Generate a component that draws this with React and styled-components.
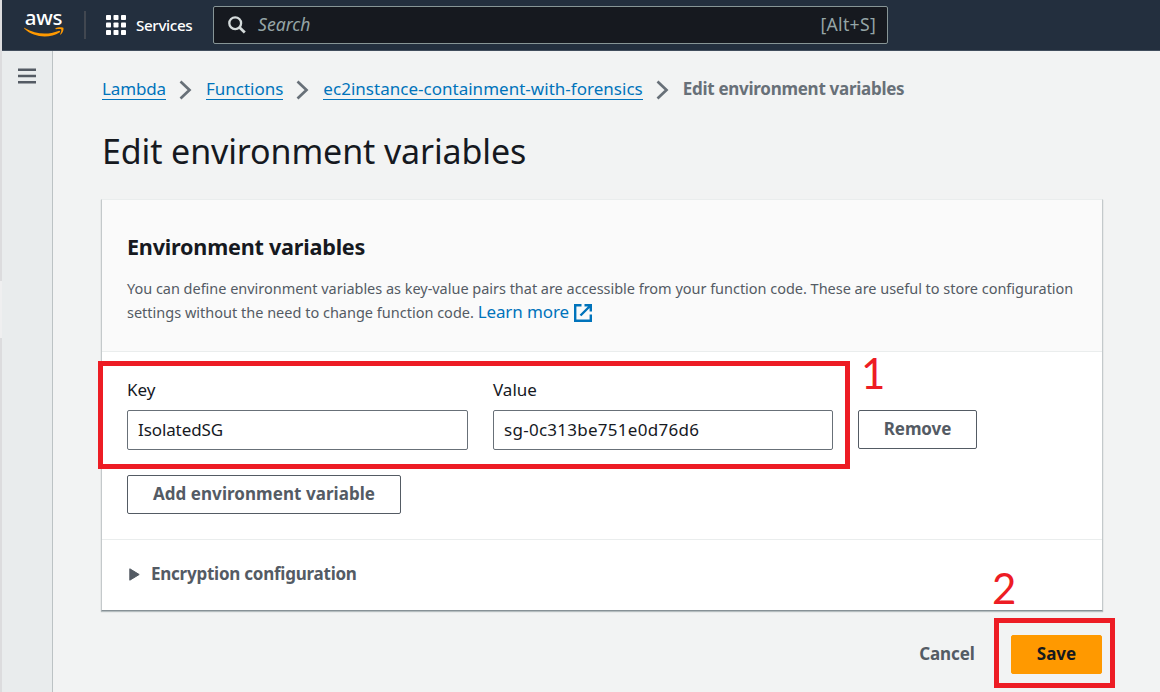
import React from "react";
import styled, { createGlobalStyle, css } from "styled-components";

const GlobalStyle = createGlobalStyle`
  *, *::before, *::after { box-sizing: border-box; }
  html, body { margin: 0; }
  body {
    background: #f2f3f3;
    color: #16191f;
    font-family: "Noto Sans", "Open Sans", sans-serif;
    font-size: 17px;
  }
`;

const Page = styled.div`
  display: flex;
  height: 692px;
  overflow: hidden;
`;

const WindowEdge = styled.div`
  width: 2px;
  flex: none;
  background: linear-gradient(#dcdcde 0 281px, #efeff0 281px 338px, #dcdcde 338px);
`;

const Console = styled.div`
  flex: 1;
  min-width: 0;
  display: flex;
  flex-direction: column;
`;

const TopBar = styled.header`
  flex: none;
  height: 51px;
  display: flex;
  align-items: flex-start;
  background: #232f3e;
  border-bottom: 1px solid #414d5c;
`;

const Logo = styled.div`
  width: 40px;
  margin: 11px 0 0 22px;
  display: flex;
  flex-direction: column;
  align-items: center;
  svg { display: block; }
`;

const LogoWord = styled.span`
  height: 16px;
  line-height: 13px;
  padding-right: 1px;
  font-size: 20.5px;
  font-weight: 500;
  letter-spacing: -0.3px;
  color: #fff;
`;

const Divider = styled.div`
  width: 2px;
  height: 28px;
  margin: 11px 20px 0 20px;
  background: #414750;
`;

const Services = styled.div`
  height: 50px;
  width: 107px;
  display: flex;
  align-items: center;
  gap: 10px;
  color: #fff;
  font-size: 15.2px;
  font-weight: 500;
  letter-spacing: -0.35px;
  white-space: nowrap;
`;

const SearchBox = styled.div`
  width: 675px;
  height: 38px;
  margin-top: 6px;
  padding: 0 11px 0 14px;
  display: flex;
  align-items: center;
  background: #16191f;
  border: 1px solid #879596;
  border-radius: 2px;
  color: #95a5a6;
`;

const SearchHint = styled.span`
  flex: 1;
  margin-left: 12px;
  padding-bottom: 2px;
  font-style: italic;
  font-size: 17.6px;
`;

const Shortcut = styled.span`
  padding-bottom: 2px;
  font-size: 17.6px;
  letter-spacing: 0.3px;
`;

const Body = styled.div`
  flex: 1;
  display: flex;
  min-height: 0;
`;

const SideRail = styled.nav`
  width: 51px;
  flex: none;
  padding: 15px 0 0 16px;
  background: #e9eced;
  border-right: 1px solid #bcc2c4;
`;

const Main = styled.main`
  width: 1002px;
  margin-left: 48px;
  padding-top: 25px;
`;

const Breadcrumbs = styled.div`
  display: flex;
  align-items: flex-start;
  height: 26px;
  padding-left: 1px;
  white-space: nowrap;
  svg { margin: 4px 14px 0 13px; }
`;

const Crumb = styled.a`
  height: 24px;
  line-height: 25px;
  font-size: 17px;
  letter-spacing: ${(p) => p.$track || 0}px;
  ${(p) => p.$current
    ? css`color: #687078; font-weight: 700;`
    : css`color: #0073bb; border-bottom: 1px solid #0073bb;`}
`;

const Title = styled.h1`
  margin: 21px 0 0 1px;
  height: 56px;
  line-height: 56px;
  font-size: 34px;
  font-weight: 400;
  letter-spacing: -0.12px;
  white-space: nowrap;
`;

const Card = styled.section`
  margin-top: 20px;
  background: #fff;
  border: 1px solid #c4c9cb;
  border-top-color: #eaeded;
  border-bottom: 1px solid #879196;
  box-shadow: 0 1px 1px rgba(0, 28, 36, 0.25);
`;

const CardHeader = styled.div`
  height: 152px;
  padding: 30px 25px 0;
  background: #fafafa;
  border-bottom: 1px solid #eaeded;
`;

const CardTitle = styled.h2`
  margin: 0;
  height: 34px;
  line-height: 34px;
  font-size: 21.6px;
  font-weight: 700;
  letter-spacing: -0.22px;
`;

const Description = styled.p`
  margin: 12px 0 0;
  font-size: 14.5px;
  line-height: 24px;
  color: #545b64;
  white-space: nowrap;
`;

const Line = styled.span`
  display: block;
  height: 24px;
  letter-spacing: ${(p) => p.$track || 0}px;
`;

const LearnMore = styled.a`
  color: #0073bb;
  font-size: 17px;
  letter-spacing: -0.1px;
  svg { margin-left: 5px; vertical-align: -4px; }
`;

const Variables = styled.div`
  height: 188px;
  padding: 25px 25px 0;
  border-bottom: 1px solid #eaeded;
`;

const VariableRow = styled.div`
  display: flex;
  align-items: flex-end;
  gap: 25px;
  margin-bottom: 25px;
`;

const Field = styled.label`
  width: ${(p) => p.$width}px;
  line-height: 26px;
`;

const Input = styled.div`
  height: 40px;
  margin-top: 7px;
  padding-left: 10px;
  line-height: 38px;
  border: 1px solid #687078;
  border-radius: 2px;
  letter-spacing: ${(p) => p.$track || 0}px;
`;

const Button = styled.button`
  display: block;
  height: 39px;
  width: ${(p) => p.$width}px;
  padding: 0 0 2px;
  font: 700 17px/35px "Noto Sans", "Open Sans", sans-serif;
  letter-spacing: ${(p) => p.$track || 0}px;
  white-space: nowrap;
  border-radius: 2px;
  border: 1px solid #545b64;
  background: #fff;
  color: #545b64;
  ${(p) => p.$variant === "primary" && css`background: #ff9900; border-color: #ff9900; color: #16191f;`}
  ${(p) => p.$variant === "link" && css`background: none; border-color: transparent;`}
`;

const RemoveSlot = styled.div`
  margin-bottom: 1px;
`;

const Expander = styled.div`
  height: 70px;
  padding: 0 0 2px 27px;
  display: flex;
  align-items: center;
  gap: 11px;
  font-weight: 700;
  letter-spacing: -0.24px;
  color: #545b64;
`;

const ExpanderLabel = styled.span`
  padding-bottom: 1px;
`;

const Actions = styled.div`
  display: flex;
  justify-content: flex-end;
  gap: 9px;
  padding: 24px 1px 0 0;
`;

const Highlight = styled.div`
  position: absolute;
  left: ${(p) => p.$x}px;
  top: ${(p) => p.$y}px;
  width: ${(p) => p.$w}px;
  height: ${(p) => p.$h}px;
  border: 5px solid #ed1c24;
  pointer-events: none;
`;

const StepNumber = styled.span`
  position: absolute;
  left: ${(p) => p.$x}px;
  top: ${(p) => p.$y}px;
  font-family: Lato, sans-serif;
  font-size: 42px;
  line-height: 48px;
  color: #ed1c24;
`;

const Smile = () => (
  <svg width="40" height="13" viewBox="0 0 40 13" fill="#ff9900">
    <path d="M0.7 0.9C12 7.6 24 7.9 34.5 3.9C36 3.4 36.8 4.5 35.5 5.4C26 11.5 10 11 0.4 1.8C-0.2 1.1 0.1 0.5 0.7 0.9Z" />
    <path d="M31.5 1.3C34 -0.3 38.5 0 39.3 0.7C40 1.7 39 5.8 36.8 7.6C36.4 7.9 36 7.7 36.2 7.2C36.8 5.7 37.7 3.2 37.2 2.5C36.6 1.8 33.8 2.1 32 2.2C31.4 2.2 31.2 1.7 31.5 1.3Z" />
  </svg>
);

const GridIcon = () => (
  <svg width="20" height="20" viewBox="0 0 20 20" fill="#fff">
    {[0, 7.5, 15].map((y) => [0, 7.5, 15].map((x) => (
      <rect key={`${x}-${y}`} x={x} y={y} width="5" height="5" rx="0.8" />
    )))}
  </svg>
);

const SearchIcon = () => (
  <svg width="18" height="18" viewBox="0 0 18 18" fill="none" stroke="#d5dbdb" strokeWidth="2.3">
    <circle cx="7.2" cy="7.2" r="5.9" />
    <path d="M11.3 11.3L16.8 16.5" strokeWidth="2.8" />
  </svg>
);

const MenuIcon = () => (
  <svg width="18" height="16" viewBox="0 0 18 16" stroke="#545b64" strokeWidth="2.4">
    <path d="M0 1.7H18M0 8H18M0 14.3H18" />
  </svg>
);

const Chevron = () => (
  <svg width="13" height="20" viewBox="0 0 13 20" fill="none" stroke="#687078" strokeWidth="2.7">
    <path d="M1.5 1.5L10.5 10L1.5 18.5" />
  </svg>
);

const ExternalIcon = () => (
  <svg width="18" height="18" viewBox="0 0 18 18" fill="none" stroke="#0073bb" strokeWidth="2.4">
    <path d="M7.5 1.2H1.2V16.8H16.8V10.5M10.5 1.2H16.8V7.5M16.5 1.5L6.5 11.5" />
  </svg>
);

const Triangle = () => (
  <svg width="11" height="13" viewBox="0 0 11 13" fill="#545b64" stroke="#545b64" strokeWidth="1" strokeLinejoin="round">
    <path d="M0.8 0.8L10.2 6.5L0.8 12.2Z" />
  </svg>
);

export default function App() {
  return (
    <>
      <GlobalStyle />
      <Page>
        <WindowEdge />
        <Console>
          <TopBar>
            <Logo><LogoWord>aws</LogoWord><Smile /></Logo>
            <Divider />
            <Services><GridIcon />Services</Services>
            <SearchBox>
              <SearchIcon />
              <SearchHint>Search</SearchHint>
              <Shortcut>[Alt+S]</Shortcut>
            </SearchBox>
          </TopBar>
          <Body>
            <SideRail><MenuIcon /></SideRail>
            <Main>
              <Breadcrumbs>
                <Crumb $track={-0.15}>Lambda</Crumb>
                <Chevron />
                <Crumb>Functions</Crumb>
                <Chevron />
                <Crumb $track={0.02}>ec2instance-containment-with-forensics</Crumb>
                <Chevron />
                <Crumb $current $track={-0.28}>Edit environment variables</Crumb>
              </Breadcrumbs>
              <Title>Edit environment variables</Title>
              <Card>
                <CardHeader>
                  <CardTitle>Environment variables</CardTitle>
                  <Description>
                    <Line $track={-0.025}>You can define environment variables as key-value pairs that are accessible from your function code. These are useful to store configuration</Line>
                    <Line>settings without the need to change function code. <LearnMore>Learn more<ExternalIcon /></LearnMore></Line>
                  </Description>
                </CardHeader>
                <Variables>
                  <VariableRow>
                    <Field $width={341}>Key<Input $track={-0.1}>IsolatedSG</Input></Field>
                    <Field $width={340}>Value<Input $track={0.27}>sg-0c313be751e0d76d6</Input></Field>
                    <RemoveSlot><Button $width={119} $track={-0.1}>Remove</Button></RemoveSlot>
                  </VariableRow>
                  <Button $width={274} $track={0.05}>Add environment variable</Button>
                </Variables>
                <Expander><Triangle /><ExpanderLabel>Encryption configuration</ExpanderLabel></Expander>
              </Card>
              <Actions>
                <Button $variant="link" $width={110} $track={-0.1}>Cancel</Button>
                <Button $variant="primary" $width={91}>Save</Button>
              </Actions>
            </Main>
          </Body>
        </Console>
      </Page>
      <Highlight $x={98} $y={361} $w={752} $h={108} />
      <StepNumber $x={861} $y={349}>1</StepNumber>
      <Highlight $x={994} $y={618} $w={121} $h={70} />
      <StepNumber $x={992} $y={564}>2</StepNumber>
    </>
  );
}
